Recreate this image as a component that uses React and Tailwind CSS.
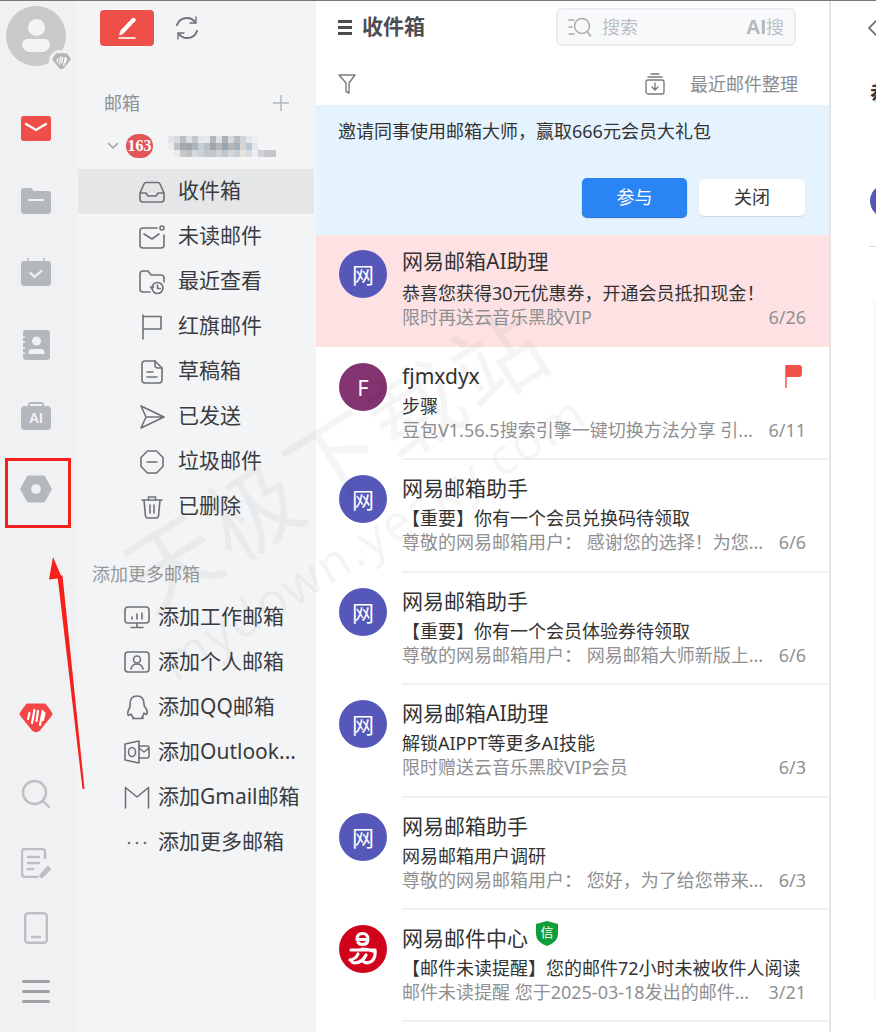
import React from 'react';

const font = { fontFamily: '"Noto Sans", "Noto Sans CJK SC", sans-serif' };

const Ic = ({ w = 26, h = 26, vb = '0 0 26 26', children, className = '' }) => (
  <svg width={w} height={h} viewBox={vb} fill="none" stroke="#6f7175" strokeWidth="1.6" strokeLinecap="round" strokeLinejoin="round" className={className}>
    {children}
  </svg>
);

const DpLogo = ({ size = 34, fill = '#f34645', bar = '#fff' }) => (
  <svg width={size} height={size * 0.88} viewBox="0 0 34 30">
    <path d="M9 0.500h16q1.500 0 2.500 1.200L33 9.500q1 1.500 0 3L21 27.500q-4 3.500-8 0L1 12.500q-1-1.500 0-3L6.500 1.700Q7.500 0.500 9 0.500z" fill={fill} />
    <path d="M9 16l1.500-6M13 20l2.500-13M17.500 18l1.500-10M21 22l2.800-14M24 17l1.500-7" stroke={bar} strokeWidth="2.200" strokeLinecap="round" fill="none" />
  </svg>
);

const railTop = [
  {
    mt: 'mt-[50px]',
    icon: (
      <svg width="30" height="26" viewBox="0 0 30 26">
        <rect width="30" height="25" rx="2.500" fill="#ee5049" />
        <path d="M5 8l10 6 10-6" stroke="#fff" strokeWidth="2.200" fill="none" strokeLinecap="round" />
      </svg>
    ),
  },
  {
    mt: 'mt-[46px]',
    icon: (
      <svg width="30" height="26" viewBox="0 0 30 26">
        <path d="M0 3q0-3 3-3h7l3 3h14q3 0 3 3v17q0 3-3 3H3q-3 0-3-3z" fill="#b4b7bc" />
        <path d="M8 12h14" stroke="#f0f1f3" strokeWidth="2.200" strokeLinecap="round" />
      </svg>
    ),
  },
  {
    mt: 'mt-[44px]',
    icon: (
      <svg width="30" height="28" viewBox="0 0 30 28">
        <rect y="3" width="30" height="25" rx="3" fill="#b4b7bc" />
        <path d="M7 0v4M23 0v4" stroke="#b4b7bc" strokeWidth="1.500" />
        <path d="M9.500 15l4 4 7-6" stroke="#f0f1f3" strokeWidth="2.200" fill="none" strokeLinecap="round" strokeLinejoin="round" />
      </svg>
    ),
  },
  {
    mt: 'mt-[44px]',
    icon: (
      <svg width="28" height="30" viewBox="0 0 28 30">
        <rect x="1" width="27" height="30" rx="3" fill="#b4b7bc" />
        <path d="M0 7h3M0 12h3M0 18h3M0 23h3" stroke="#f0f1f3" strokeWidth="1.500" />
        <circle cx="14.500" cy="11" r="4.500" fill="#f0f1f3" />
        <path d="M6.500 24v-1.500q0-3.500 4-3.500h8q4 0 4 3.500V24z" fill="#f0f1f3" />
      </svg>
    ),
  },
  {
    mt: 'mt-[42px]',
    icon: (
      <div className="relative flex h-[28px] w-[30px] items-end">
        <div className="absolute left-[7px] top-0 h-[6px] w-[16px] rounded-t-[3px] border-2 border-b-0 border-[#b4b7bc]" />
        <div className="flex h-[24px] w-[30px] items-center justify-center rounded-[4px] bg-[#b4b7bc] text-[14px] font-bold leading-none text-[#f0f1f3]" style={{ fontFamily: '"Liberation Sans", sans-serif' }}>AI</div>
      </div>
    ),
  },
  {
    mt: 'mt-[45px]',
    icon: (
      <svg width="32" height="28" viewBox="0 0 32 28">
        <path d="M8.500 0.500h15q1 0 1.500 1l6.500 11.500q.5 1 0 2L25 26.500q-.5 1-1.500 1h-15q-1 0-1.500-1L.5 15q-.5-1 0-2L7 1.500q.5-1 1.500-1z" fill="#b4b7bc" />
        <circle cx="16" cy="14" r="4.800" fill="#f0f1f3" />
      </svg>
    ),
  },
];

const folders = [
  {
    label: '收件箱',
    active: true,
    icon: (
      <Ic>
        <path d="M1 14l4-9q.5-1.500 2-1.500h12q1.500 0 2 1.500l4 9v6q0 3-3 3H4q-3 0-3-3z" />
        <path d="M1 14h6l2 3h8l2-3h6" />
      </Ic>
    ),
  },
  {
    label: '未读邮件',
    icon: (
      <Ic>
        <path d="M18 4H4q-3 0-3 3v14q0 3 3 3h18q3 0 3-3V11" />
        <path d="M5 10l8 5 7-5" />
        <circle cx="23" cy="4" r="2" />
      </Ic>
    ),
  },
  {
    label: '最近查看',
    icon: (
      <Ic>
        <path d="M11 23H4q-3 0-3-3V5q0-3 3-3h5l3 4h10q3 0 3 3v4" />
        <circle cx="18.500" cy="19" r="5.500" />
        <path d="M18.500 16v3.500h3M11.500 18l1.500 1.500 1.500-1.500" />
      </Ic>
    ),
  },
  {
    label: '红旗邮件',
    icon: (
      <Ic>
        <path d="M4 1v24M4 2.500h18V15H4" />
      </Ic>
    ),
  },
  {
    label: '草稿箱',
    icon: (
      <Ic>
        <path d="M16 2H6q-3 0-3 3v16q0 3 3 3h14q3 0 3-3V9z" />
        <path d="M16 2v4q0 3 3 3h4M8 13h6M8 18h10" />
      </Ic>
    ),
  },
  {
    label: '已发送',
    icon: (
      <Ic>
        <path d="M2 2l23 11L2 24l5-11zM7 13h18" />
      </Ic>
    ),
  },
  {
    label: '垃圾邮件',
    icon: (
      <Ic>
        <path d="M8.500 2h9L24 8.500v9L17.500 24h-9L2 17.500v-9z" />
        <path d="M8 13h10" />
      </Ic>
    ),
  },
  {
    label: '已删除',
    icon: (
      <Ic>
        <path d="M3 6h20M9.500 6V3h7v3M5 6l1.500 16q.3 2 2.500 2h8q2.200 0 2.500-2L21 6M11 11v8M15 11v8" />
      </Ic>
    ),
  },
];

const addItems = [
  {
    label: '添加工作邮箱',
    icon: (
      <Ic>
        <rect x="1" y="3" width="24" height="16" rx="3" />
        <path d="M13 19v4M7 23.500h12M8 13v2M13 10v5M18 9v6" />
      </Ic>
    ),
  },
  {
    label: '添加个人邮箱',
    icon: (
      <Ic>
        <rect x="1" y="3" width="24" height="20" rx="3" />
        <circle cx="13" cy="10.500" r="3.500" />
        <path d="M7 20q1-5 6-5t6 5" />
      </Ic>
    ),
  },
  {
    label: '添加QQ邮箱',
    icon: (
      <Ic>
        <path d="M6 10q0-8 7-8t7 8q0 2 1 3 3 4 2 7-1 1-3-1-.5 3-2 4 2 1 .5 1.500H9.500Q8 25 10 24q-2-1-3-4-2 2-3 1-1-3 2-8 0-1 0-3z" />
      </Ic>
    ),
  },
  {
    label: '添加Outlook...',
    icon: (
      <Ic>
        <path d="M1 5l14-3v22L1 21z" />
        <ellipse cx="8" cy="13" rx="3.500" ry="4.500" />
        <path d="M15 7h8q2 0 2 2v8q0 2-2 2h-8M15 9l5 4 5-4" />
      </Ic>
    ),
  },
  {
    label: '添加Gmail邮箱',
    icon: (
      <Ic>
        <path d="M1.500 24V3.500L13 13 24.500 3.500V24" />
      </Ic>
    ),
  },
  {
    label: '添加更多邮箱',
    icon: (
      <svg width="26" height="26" viewBox="0 0 26 26" fill="#6f7175">
        <circle cx="5" cy="14" r="1.300" />
        <circle cx="13" cy="14" r="1.300" />
        <circle cx="21" cy="14" r="1.300" />
      </svg>
    ),
  },
];

const mosaic = [
  ['#e2e4e7', '#d8dade', '#b8bec4', '#dcdfe2', '#c2c8ce', '#e4e6e9', '#e6e8ea', '#b2b8bd', '#e0e2e4', '#aab3bc', '#d8dbde', '#b8bdc2', '#d2d6da', '#e2e9ef', '#eef0f3', '#f3f4f6', '#f3f4f6', '#f3f4f6', '#f3f4f6'],
  ['#eceef0', '#bfc2c6', '#a6a9ae', '#a3a6ac', '#afb4b9', '#c4cfd9', '#b9bec2', '#a1a5aa', '#b5b8bb', '#96a5b5', '#b5b7b9', '#a6b0bd', '#d9d6d1', '#b6c7d6', '#e2e8ec', '#f3f4f6', '#f3f4f6', '#f3f4f6', '#f3f4f6'],
  ['#f3f4f6', '#ecebe9', '#cdc8c3', '#bcc0c5', '#d6d9dc', '#c9d1da', '#c2c6ca', '#c3c6c9', '#d3d3d3', '#bfc8d1', '#d3d5d8', '#cbcfd4', '#e4e2da', '#d5dbe1', '#ebedf0', '#d0d1d5', '#c4c6ca', '#c4c6ca', '#f3f4f6'],
];

const Wang = () => (
  <div className="flex h-[48px] w-[48px] shrink-0 items-center justify-center rounded-full bg-[#5558b8] text-[22px] leading-none text-white">网</div>
);

const Yi = () => (
  <svg width="48" height="48" viewBox="0 0 48 48" className="shrink-0">
    <circle cx="24" cy="24" r="24" fill="#d0021b" />
    <g stroke="#fff" strokeWidth="3.200" fill="none" strokeLinecap="round" strokeLinejoin="round">
      <path d="M18 14.500h11M18 14.500q0-6 5.500-6t5.500 6M29 14.500q-.5 5-5.500 5-3 0-4.500-2" />
      <path d="M12 25h24q1 7-3 11-4 3-8 1M19 29q-2 5-8 6M27 30q-3 7-11 8-3 0-3-2M34 26q-5-2-11-2" />
    </g>
  </svg>
);

const mails = [
  { title: '网易邮箱AI助理', subject: '恭喜您获得30元优惠券，开通会员抵扣现金！', preview: '限时再送云音乐黑胶VIP', date: '6/26', pink: true },
  {
    title: 'fjmxdyx',
    subject: '步骤',
    preview: '豆包V1.56.5搜索引擎一键切换方法分享 引...',
    date: '6/11',
    avatar: <div className="flex h-[48px] w-[48px] shrink-0 items-center justify-center rounded-full bg-[#83336f] text-[22px] leading-none text-white">F</div>,
    flag: true,
  },
  { title: '网易邮箱助手', subject: '【重要】你有一个会员兑换码待领取', preview: '尊敬的网易邮箱用户： 感谢您的选择！为您...', date: '6/6' },
  { title: '网易邮箱助手', subject: '【重要】你有一个会员体验券待领取', preview: '尊敬的网易邮箱用户： 网易邮箱大师新版上...', date: '6/6' },
  { title: '网易邮箱AI助理', subject: '解锁AIPPT等更多AI技能', preview: '限时赠送云音乐黑胶VIP会员', date: '6/3' },
  { title: '网易邮箱助手', subject: '网易邮箱用户调研', preview: '尊敬的网易邮箱用户： 您好，为了给您带来...', date: '6/3' },
  {
    title: '网易邮件中心',
    subject: '【邮件未读提醒】您的邮件72小时未被收件人阅读',
    preview: '邮件未读提醒 您于2025-03-18发出的邮件...',
    date: '3/21',
    avatar: <Yi />,
    shield: true,
  },
];

const MailRow = ({ mail }) => (
  <div className={`flex shrink-0 ${mail.pink ? 'h-[112px] bg-[#fee2e3] pt-[15px]' : 'h-[112.4px] pt-[16px]'}`}>
    <div className="ml-[23px] mr-[15px]">{mail.avatar || <Wang />}</div>
    <div className={`relative min-w-0 flex-1 pr-[23px] ${mail.pink ? '-mt-[2px]' : '-mb-[1px] border-b-2 border-[#f1f1f2]'}`}>
      <div className="flex h-[26px] items-center text-[21px] leading-[26px] text-[#333]">
        {mail.title}
        {mail.shield && (
          <svg width="22" height="25" viewBox="0 0 22 25" className="ml-[8px] -mt-[8px]">
            <path d="M11 0l11 3v10q0 8-11 12Q0 21 0 13V3z" fill="#0f9d3a" />
            <text x="11" y="16" textAnchor="middle" fontSize="13" fill="#fff">信</text>
          </svg>
        )}
      </div>
      {mail.flag && (
        <svg width="18" height="23" viewBox="0 0 18 23" className="absolute right-[26px] top-[2px]">
          <path d="M1 0v23" stroke="#f0524a" strokeWidth="1.500" />
          <path d="M1 0h13q3 0 3 3v6q0 3-3 3H1z" fill="#f0524a" />
        </svg>
      )}
      <div className={`h-[24px] whitespace-nowrap text-[18px] leading-[24px] text-[#333] ${mail.pink ? 'mt-[7px]' : 'mt-[5px]'}`}>{mail.subject}</div>
      <div className="flex h-[24px] justify-between whitespace-nowrap text-[18px] leading-[24px] text-[#909092]">
        <span>{mail.preview}</span>
        <span>{mail.date}</span>
      </div>
    </div>
  </div>
);

export default function App() {
  return (
    <div className="relative flex h-[1032px] w-[876px] overflow-hidden border-t border-[#77787a] bg-white" style={font}>
      {/* icon rail */}
      <div className="flex w-[78px] shrink-0 flex-col items-center bg-[#f0f1f3] pb-[29px] pr-[6px]">
        <div className="relative mt-[5px] flex h-[60px] w-[60px] flex-col items-center rounded-full bg-[#c8c9cb]">
          <div className="mt-[13px] h-[17px] w-[17px] rounded-full bg-[#f3f4f6]" />
          <div className="mt-[3px] h-[13px] w-[28px] rounded-b-[9px] rounded-t-[6px] bg-[#f3f4f6]" />
          <div className="absolute bottom-[-6px] right-[-7px] flex h-[22px] w-[24px] items-center justify-center rounded-full bg-[#f0f1f3]">
            <DpLogo size={19} fill="#b5b6b9" />
          </div>
        </div>
        {railTop.map((item, i) => (
          <div key={i} className={`flex justify-center ${item.mt}`}>{item.icon}</div>
        ))}
        <div className="mt-auto">
          <DpLogo />
        </div>
        <svg width="30" height="30" viewBox="0 0 30 30" fill="none" stroke="#bdbfc3" strokeWidth="2.400" strokeLinecap="round" className="mt-[46px]">
          <circle cx="13.500" cy="13.500" r="11.500" />
          <path d="M22 22l6 6" />
        </svg>
        <svg width="30" height="30" viewBox="0 0 30 30" fill="none" stroke="#bdbfc3" strokeWidth="2.400" strokeLinecap="round" strokeLinejoin="round" className="mt-[39px]">
          <path d="M24 10V4q0-3-3-3H4Q1 1 1 4v22q0 3 3 3h12" />
          <path d="M7 9h11M7 15h11M7 21h5" />
          <path d="M19 28l8-9 2 2-8 8z" fill="#bdbfc3" />
        </svg>
        <svg width="24" height="32" viewBox="0 0 24 32" fill="none" stroke="#bdbfc3" strokeWidth="2.400" strokeLinecap="round" className="mt-[34px]">
          <rect x="1.200" y="1.200" width="21.600" height="29.600" rx="3" />
          <path d="M8 25h8" />
        </svg>
        <div className="mt-[36px] flex w-[28px] flex-col gap-[7px]">
          <div className="h-[3px] rounded-full bg-[#a0a1a4]" />
          <div className="h-[3px] rounded-full bg-[#a0a1a4]" />
          <div className="h-[3px] rounded-full bg-[#a0a1a4]" />
        </div>
      </div>

      {/* mailbox sidebar */}
      <div className="flex w-[238px] shrink-0 flex-col bg-[#f3f4f6]">
        <div className="mt-[9px] flex items-center">
          <div className="ml-[22px] flex h-[36px] w-[54px] items-center justify-center rounded-[4px] bg-[#ee5049]">
            <svg width="20" height="21" viewBox="0 0 20 21" fill="none" stroke="#fff">
              <path d="M4.500 14.500L14 4.500" strokeWidth="4.200" />
              <path d="M15 3.500l1.500-1.500" strokeWidth="4.200" strokeLinecap="round" />
              <path d="M2.500 17l.8-3.500 2.500 2.500z" fill="#fff" strokeWidth="0.500" />
              <path d="M1.500 20h17" strokeWidth="1.600" />
            </svg>
          </div>
          <svg width="26" height="26" viewBox="0 0 26 26" fill="none" stroke="#6f7175" strokeWidth="2" strokeLinecap="round" className="ml-[20px]">
            <path d="M3 10q2.500-7 10-7 5 0 8 4M23 16q-2.500 7-10 7-5 0-8-4" />
            <path d="M22 2v6h-6M4 24v-6h6" strokeWidth="1.400" />
          </svg>
        </div>
        <div className="mt-[44px] flex h-[26px] items-center justify-between pl-[26px] pr-[26px] text-[18px] leading-[26px] text-[#8f9194]">
          邮箱
          <svg width="18" height="18" viewBox="0 0 18 18" stroke="#b4b6b9" strokeWidth="1.500"><path d="M9 1v16M1 9h16" /></svg>
        </div>
        <div className="mt-[15px] flex h-[30px] items-center">
          <svg width="12" height="8" viewBox="0 0 12 8" fill="none" stroke="#a0a2a5" strokeWidth="1.500" className="ml-[29px]"><path d="M1 1l5 5 5-5" /></svg>
          <div className="ml-[7px] flex h-[24px] w-[27px] items-center justify-center rounded-full bg-[#e4545b] text-[16px] font-bold leading-none text-white" style={{ fontFamily: '"Liberation Serif", serif' }}>163</div>
          <div className="ml-[15px] flex flex-col">
            {mosaic.map((line, i) => (
              <div key={i} className="flex">
                {line.map((c, j) => (
                  <div key={j} className="h-[7px] w-[6px]" style={{ backgroundColor: c }} />
                ))}
              </div>
            ))}
          </div>
        </div>
        <div className="mt-[8px] flex flex-col">
          {folders.map((f) => (
            <div key={f.label} className={`flex h-[45px] items-center pl-[61px] text-[21px] text-[#3a3c40] ${f.active ? 'mr-[2px] bg-[#e5e6e8]' : ''}`}>
              {f.icon}
              <span className="ml-[13px] -mt-[2px]">{f.label}</span>
            </div>
          ))}
        </div>
        <div className="mt-[32px] h-[26px] pl-[14px] text-[18px] leading-[26px] text-[#97999c]">添加更多邮箱</div>
        <div className="mt-[7px] flex flex-col">
          {addItems.map((f) => (
            <div key={f.label} className="flex h-[45px] items-center whitespace-nowrap pl-[46px] text-[21px] text-[#3a3c40]">
              {f.icon}
              <span className="ml-[8px]">{f.label}</span>
            </div>
          ))}
        </div>
      </div>

      {/* message list */}
      <div className="flex w-[515px] shrink-0 flex-col overflow-hidden border-r-2 border-[#e5e5e6]">
        <div className="flex h-[44px] shrink-0 items-center pl-[22px] pt-[8px]">
          <div className="flex w-[14px] flex-col gap-[3px]">
            <div className="h-[3px] bg-[#4b4d51]" />
            <div className="h-[3px] bg-[#4b4d51]" />
            <div className="h-[3px] bg-[#4b4d51]" />
          </div>
          <span className="ml-[10px] text-[21px] font-bold text-[#4b4d51]">收件箱</span>
          <div className="ml-[131px] flex h-[38px] w-[240px] items-center rounded-[6px] border-2 border-[#eaecf0] bg-[#f8f9fb] pl-[10px] pr-[10px]">
            <svg width="24" height="24" viewBox="0 0 24 24" fill="none" stroke="#a9abaf" strokeWidth="1.500" strokeLinecap="round">
              <path d="M1 5h5M1 12h3M1 19h5" />
              <circle cx="14" cy="11" r="7.500" />
              <path d="M19.500 17l3 4" />
            </svg>
            <span className="ml-[10px] text-[18px] text-[#bcbec2]">搜索</span>
            <span className="ml-auto flex items-center text-[18px] text-[#bcbec2]"><b className="text-[20px] font-bold text-[#b5b7bb]" style={{ fontFamily: '"Liberation Sans", sans-serif' }}>AI</b>搜</span>
          </div>
        </div>
        <div className="flex h-[60px] shrink-0 items-center justify-between pl-[22px] pr-[31px] pt-[18px]">
          <svg width="18" height="20" viewBox="0 0 18 20" fill="none" stroke="#77797d" strokeWidth="1.400" strokeLinejoin="round">
            <path d="M1 1h16l-6 8v10l-3-1.500V9z" />
          </svg>
          <div className="flex items-center">
            <svg width="20" height="22" viewBox="0 0 20 22" fill="none" stroke="#77797d" strokeWidth="1.300" strokeLinecap="round">
              <path d="M6 1h8M3 4h14" />
              <rect x="1" y="7" width="18" height="14" rx="2" />
              <path d="M10 10v7M7 14l3 3 3-3" />
            </svg>
            <span className="ml-[25px] text-[18px] text-[#8a8c8f]">最近邮件整理</span>
          </div>
        </div>
        <div className="flex h-[130px] shrink-0 flex-col bg-[#e5f3fe] pl-[22px] pr-[24px]">
          <div className="mt-[11px] h-[30px] text-[18px] leading-[30px] text-[#333]">邀请同事使用邮箱大师，赢取666元会员大礼包</div>
          <div className="mt-[32px] flex items-start justify-end gap-[12px]">
            <div className="flex h-[39px] w-[105px] items-center justify-center rounded-[5px] bg-[#2b84f4] text-[18px] text-white shadow-[0_1px_1px_#2468c4]">参与</div>
            <div className="mt-[1px] flex h-[37px] w-[106px] items-center justify-center rounded-[5px] bg-white text-[18px] text-[#333] shadow-[0_1px_1px_#d4d6d9]">关闭</div>
          </div>
        </div>
        {mails.map((m, i) => <MailRow key={i} mail={m} />)}
      </div>

      {/* reading pane, cut by the window edge */}
      <div className="relative min-w-0 flex-1 overflow-hidden bg-white">
        <svg width="10" height="18" viewBox="0 0 10 18" fill="none" stroke="#6f7175" strokeWidth="1.800" className="absolute left-[37px] top-[18px]"><path d="M9 1L1 9l8 8" /></svg>
        <span className="absolute left-[39px] top-[76px] whitespace-nowrap text-[21px] font-bold leading-[30px] text-[#333]">恭喜您获得</span>
        <div className="absolute left-[39px] top-[183px] h-[34px] w-[48px] rounded-full bg-[#5558b8]" />
        <div className="absolute left-[38px] top-[245px] h-px w-[20px] bg-[#d8d8d8]" />
        <div className="absolute left-[42px] top-[298px] h-[700px] w-[10px] bg-[#fdf6fc]" />
      </div>

      {/* site watermark over the page */}
      <div className="pointer-events-none absolute left-[130px] top-[535px] origin-left -rotate-[32deg] whitespace-nowrap text-[92px] leading-none tracking-[4px] text-black/[0.04]" style={{ fontFamily: '"Noto Sans CJK SC", sans-serif' }}>天极下载站</div>
      <div className="pointer-events-none absolute left-[165px] top-[640px] origin-left -rotate-[32deg] whitespace-nowrap text-[50px] leading-none tracking-[2px] text-black/[0.04]">mydown.yesky.com</div>

      {/* red annotation */}
      <div className="pointer-events-none absolute left-[5px] top-[457px] h-[70px] w-[66px] border-[3px] border-[#f5201c]" />
      <svg width="50" height="245" viewBox="0 0 50 245" className="pointer-events-none absolute left-[45px] top-[555px]">
        <path d="M37.500 233L12.500 20l5-.5 22 213.500z" fill="#f5201c" />
        <path d="M8 1l9 21-13 1.500z" fill="#f5201c" />
      </svg>
    </div>
  );
}
